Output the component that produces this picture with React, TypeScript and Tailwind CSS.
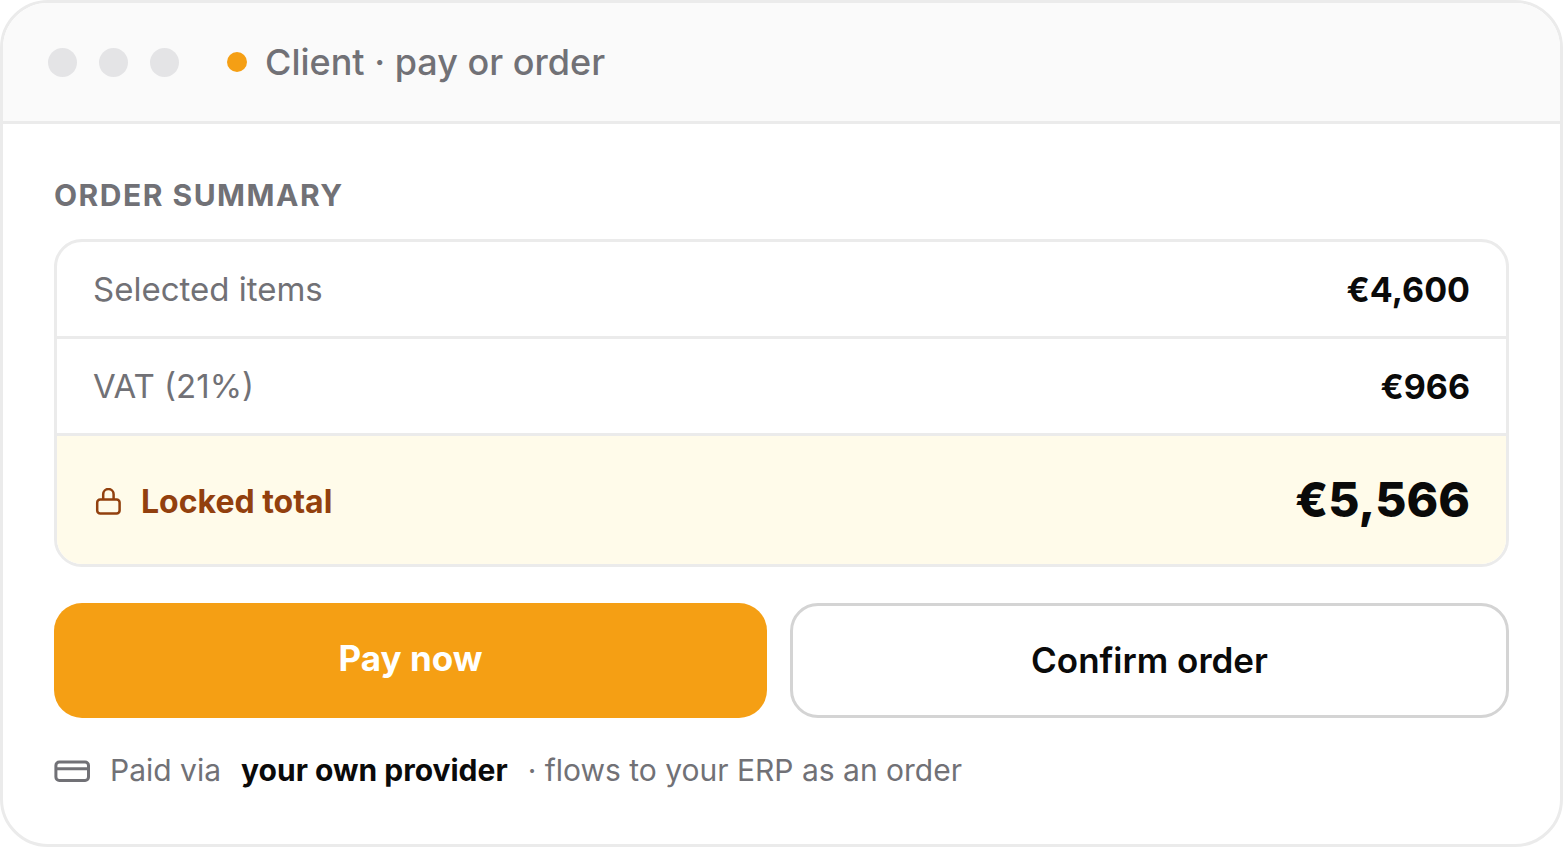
const items = [
  { label: "Selected items", amount: "€4,600" },
  { label: "VAT (21%)", amount: "€966" },
];

function LockIcon() {
  return (
    <svg
      className="h-7 w-[26px] shrink-0"
      viewBox="0 0 26 28"
      fill="none"
      stroke="currentColor"
      strokeWidth="2.5"
      aria-hidden="true"
    >
      <rect x="2.2" y="11.4" width="22.4" height="14" rx="3" />
      <path d="M8.2 11.4V6.2a5.2 5.2 0 0 1 10.4 0v5.2" />
    </svg>
  );
}

function CardIcon() {
  return (
    <svg
      className="h-6 w-9 shrink-0"
      viewBox="0 0 36 24"
      fill="none"
      stroke="currentColor"
      strokeWidth="3"
      aria-hidden="true"
    >
      <rect x="1.9" y="4" width="32.6" height="18.5" rx="3.4" />
      <path d="M1.9 10.8h32.6" />
    </svg>
  );
}

export default function App() {
  return (
    <main className="min-h-screen flex flex-col overflow-hidden rounded-[48px] border-3 border-[#ebebeb] bg-white font-['Inter','Liberation_Sans',sans-serif] text-[#0a0a0a]">
      <header className="flex items-center border-b-3 border-[#ebebeb] bg-[#fafafa] px-[45px] py-8">
        <div className="flex gap-[22px]">
          <span className="size-[29px] rounded-full bg-[#e4e4e6]" />
          <span className="size-[29px] rounded-full bg-[#e4e4e6]" />
          <span className="size-[29px] rounded-full bg-[#e4e4e6]" />
        </div>
        <span className="ml-12 size-5 rounded-full bg-[#f59f14]" />
        <h1 className="ml-[18px] text-[36px] leading-[54px] font-medium text-[#717176]">
          Client · pay or order
        </h1>
      </header>

      <section className="px-[51px] pt-12">
        <h2 className="text-[30px] leading-[46px] font-bold tracking-wider text-[#717176] uppercase">
          Order summary
        </h2>

        <div className="mt-[21px] overflow-hidden rounded-[28px] border-3 border-[#ebebeb]">
          <table className="w-full border-separate border-spacing-0">
            <tbody>
              {items.map((item) => (
                <tr key={item.label} className="h-[97px]">
                  <th
                    scope="row"
                    className="border-b-3 border-[#ebebeb] pt-0.5 pl-9 text-left text-[33px] font-normal text-[#717176]"
                  >
                    {item.label}
                  </th>
                  <td className="border-b-3 border-[#ebebeb] pr-9 text-right text-[34px] font-bold">
                    {item.amount}
                  </td>
                </tr>
              ))}
              <tr className="h-32 bg-[#fffbea]">
                <th scope="row" className="pt-1 pl-[38px] text-[32px] font-bold text-[#92400e]">
                  <span className="flex items-center gap-5">
                    <LockIcon />
                    Locked total
                  </span>
                </th>
                <td className="pr-9 text-right text-[48px] font-extrabold">€5,566</td>
              </tr>
            </tbody>
          </table>
        </div>

        <div className="mt-9 flex gap-[23px]">
          <button
            type="button"
            className="h-[115px] flex-1 rounded-[28px] bg-[#f59f14] pb-1 text-[35px] font-bold text-white"
          >
            Pay now
          </button>
          <button
            type="button"
            className="h-[115px] flex-1 rounded-[28px] border-3 border-[#d4d4d4] bg-white text-[35px] font-semibold"
          >
            Confirm order
          </button>
        </div>

        <p className="mt-[29px] flex items-center gap-5 text-[30px] leading-[46px] text-[#717176]">
          <CardIcon />
          <span>Paid via</span>
          <strong className="font-bold text-[#0a0a0a]">your own provider</strong>
          <span>· flows to your ERP as an order</span>
        </p>
      </section>
    </main>
  );
}
